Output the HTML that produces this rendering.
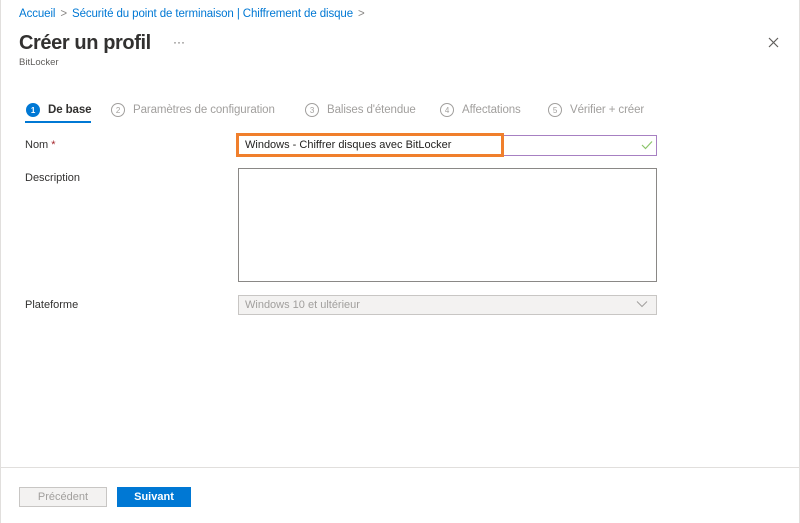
<!DOCTYPE html>
<html><head><meta charset="utf-8"><style>
*{margin:0;padding:0;box-sizing:border-box}
body{width:800px;height:523px;background:#fff;font-family:"Liberation Sans",sans-serif;position:relative;overflow:hidden;color:#323130;border-left:1px solid #e1dfdd;border-right:1px solid #e1dfdd}
.a{position:absolute;white-space:nowrap}
.bc{left:18px;top:8px;font-size:11.5px;color:#0078d4;letter-spacing:-0.1px}
.bc span{color:#8a8886;margin:0 5px}
h1{position:absolute;left:18px;top:32px;font-size:20px;font-weight:bold;color:#323130;letter-spacing:-0.4px}
.sub{left:18px;top:57px;font-size:9.5px;color:#605e5c}
.st{top:103px;font-size:11.5px;color:#a19f9d;display:flex;align-items:center;letter-spacing:-0.1px}
.c{width:14px;height:14px;border:1px solid #a19f9d;border-radius:50%;font-size:8px;display:flex;align-items:center;justify-content:center;margin-right:8px}
.lbl{left:24px;font-size:11px;color:#323130}
.box{position:absolute;border:1px solid #8a8886;background:#fff}
.btn{position:absolute;top:487px;height:20px;font-size:11px;display:flex;align-items:center;justify-content:center}
</style></head><body>
<div class="a bc">Accueil<span>&gt;</span>Sécurité du point de terminaison | Chiffrement de disque<span>&gt;</span></div>
<h1>Créer un profil</h1>
<div class="a" style="left:172px;top:35px;font-size:12px;color:#605e5c">···</div>
<div class="a sub">BitLocker</div>
<svg class="a" style="left:767px;top:37px" width="11" height="11" viewBox="0 0 11 11"><path d="M1 1L10 10M10 1L1 10" stroke="#605e5c" stroke-width="1.2"/></svg>

<div class="a st" style="left:25px;color:#323130;font-weight:bold"><div class="c" style="background:#0078d4;border-color:#0078d4;color:#fff">1</div>De base</div>
<div class="a" style="left:24px;top:121px;width:66px;height:2px;background:#0078d4"></div>
<div class="a st" style="left:110px"><div class="c">2</div>Paramètres de configuration</div>
<div class="a st" style="left:304px"><div class="c">3</div>Balises d'étendue</div>
<div class="a st" style="left:439px"><div class="c">4</div>Affectations</div>
<div class="a st" style="left:547px"><div class="c">5</div>Vérifier + créer</div>

<div class="a lbl" style="top:139px">Nom <span style="color:#a4262c">*</span></div>
<div class="box" style="left:237px;top:135px;width:419px;height:21px;border-color:#a780c2"></div>
<div class="a" style="left:235px;top:133px;width:268px;height:24px;border:3px solid #f07f2c"></div>
<div class="a" style="left:244px;top:139px;font-size:11px;color:#201f1e">Windows - Chiffrer disques avec BitLocker</div>
<svg class="a" style="left:640px;top:140px" width="12" height="10" viewBox="0 0 12 10"><path d="M1 5L4.5 8.5L11 1.5" stroke="#8cc56b" stroke-width="1.2" fill="none"/></svg>

<div class="a lbl" style="top:172px">Description</div>
<div class="box" style="left:237px;top:168px;width:419px;height:114px"></div>

<div class="a lbl" style="top:299px">Plateforme</div>
<div class="box" style="left:237px;top:295px;width:419px;height:20px;background:#f3f2f1;border-color:#c8c6c4"></div>
<div class="a" style="left:244px;top:299px;font-size:11px;color:#a19f9d">Windows 10 et ultérieur</div>
<svg class="a" style="left:635px;top:300px" width="12" height="8" viewBox="0 0 12 8"><path d="M1 1.5L6 6.5L11 1.5" stroke="#a19f9d" stroke-width="1" fill="none"/></svg>

<div class="a" style="left:0;top:467px;width:800px;height:1px;background:#e1dfdd"></div>
<div class="btn" style="left:18px;width:88px;border:1px solid #c8c6c4;background:#f3f2f1;color:#a19f9d">Précédent</div>
<div class="btn" style="left:116px;width:74px;background:#0078d4;color:#fff;font-weight:bold">Suivant</div>
</body></html>
